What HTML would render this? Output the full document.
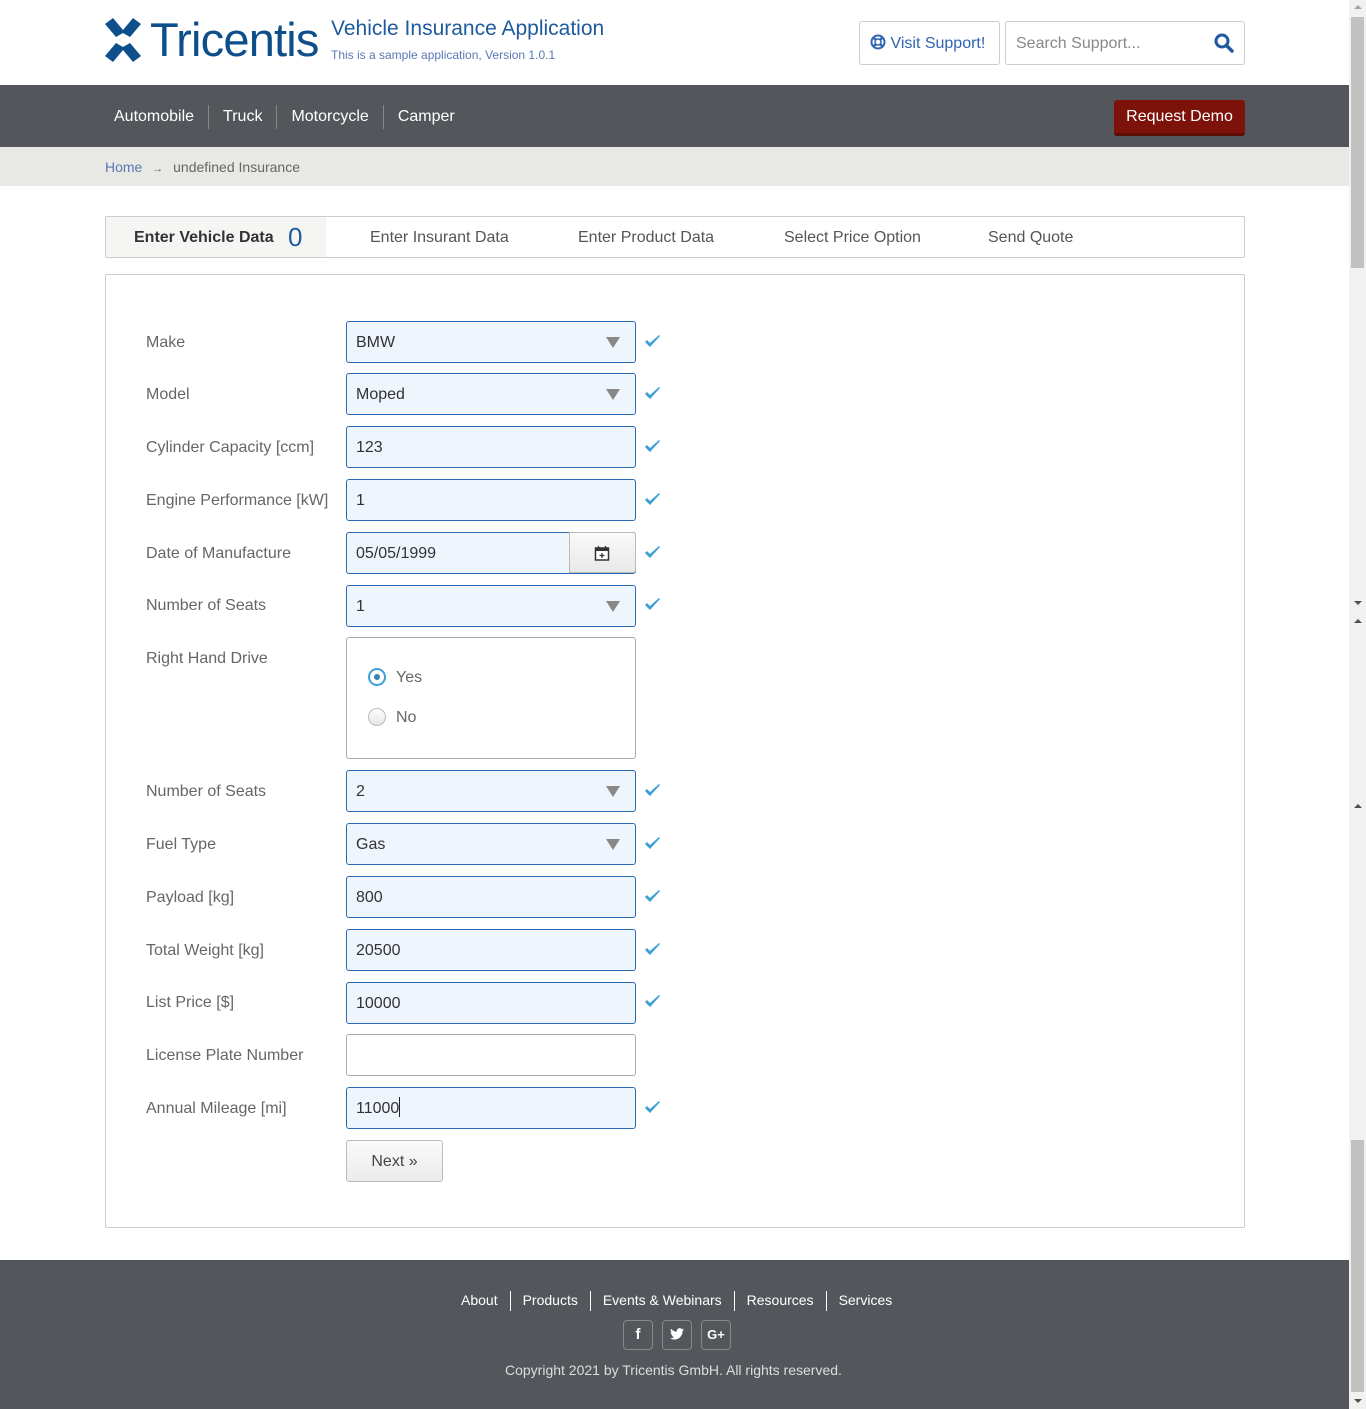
<!DOCTYPE html>
<html><head><meta charset="utf-8"><style>
*{box-sizing:border-box;margin:0;padding:0}
body{width:1366px;height:1409px;position:relative;font-family:"Liberation Sans",sans-serif;background:#fff;overflow:hidden;color:#555}
.a{position:absolute}
.lbl{position:absolute;left:146px;font-size:16px;color:#666;line-height:42px;margin-top:1px}
.in{position:absolute;left:346px;width:290px;height:42px;border:1px solid #2a6ab5;border-radius:3px;background:#eef5fd;font-size:16px;color:#333;line-height:42px;padding-left:9px}
.in.w{background:#fff;border-color:#aaa}
.arr{position:absolute;right:15px;top:15px;width:0;height:0;border-left:7px solid transparent;border-right:7px solid transparent;border-top:11px solid #888}
.chk{position:absolute;left:643px;width:18px;height:42px}
.nav span{color:#fff;font-size:16px}
.sep{display:inline-block;width:1px;height:24px;background:#888;vertical-align:middle;margin:0 14px}
.tab{position:absolute;top:229px;font-size:16px;color:#555}
.fl{color:#fff;font-size:14px}
.soc{position:absolute;top:1320px;width:30px;height:30px;border:1px solid #888;border-radius:4px;color:#fff;font-weight:bold;font-size:15px;text-align:center;line-height:28px}
</style></head><body>
<svg class="a" style="left:105px;top:18px" width="36" height="44" viewBox="0 0 36 44"><g fill="#0d4f8b"><path d="M0 6L8 0L18 12L28 0L36 6L25 19L18 15L11 19Z"/><path d="M0 38L8 44L18 32L28 44L36 38L25 25L18 29L11 25Z"/></g></svg>
<div class="a" style="left:150px;top:12px;font-size:47px;color:#0d4f8b;letter-spacing:-0.8px">Tricentis</div>
<div class="a" style="left:331px;top:17px;font-size:21px;color:#1f5a9e">Vehicle Insurance Application</div>
<div class="a" style="left:331px;top:48px;font-size:12px;color:#5a78b4">This is a sample application, Version 1.0.1</div>
<div class="a" style="left:859px;top:21px;width:141px;height:44px;border:1px solid #ccc;border-radius:3px;font-size:16px;color:#2e64b0;line-height:44px;padding-left:10px">
<svg width="16" height="16" viewBox="0 0 16 16" style="vertical-align:-2px"><circle cx="8" cy="8" r="6.5" fill="none" stroke="#2e64b0" stroke-width="2"/><circle cx="8" cy="8" r="3" fill="none" stroke="#2e64b0" stroke-width="1.5"/><path d="M3 3L6 6M13 3L10 6M3 13L6 10M13 13L10 10" stroke="#2e64b0" stroke-width="2.5"/></svg> Visit Support!</div>
<div class="a" style="left:1005px;top:21px;width:240px;height:44px;border:1px solid #ccc;border-radius:3px;font-size:16px;color:#888;line-height:44px;padding-left:10px">Search Support...
<svg class="a" style="right:10px;top:11px" width="20" height="20" viewBox="0 0 20 20"><circle cx="8" cy="8" r="6" fill="none" stroke="#1f5a9e" stroke-width="3"/><path d="M12.5 12.5L18 18" stroke="#1f5a9e" stroke-width="3.5" stroke-linecap="round"/></svg></div>
<div class="a nav" style="left:0;top:85px;width:1349px;height:62px;background:#53565b"></div>
<div class="a nav" style="left:114px;top:105px;line-height:24px"><span>Automobile</span><i class="sep"></i><span>Truck</span><i class="sep"></i><span>Motorcycle</span><i class="sep"></i><span>Camper</span></div>
<div class="a" style="left:1114px;top:100px;width:131px;height:36px;background:#7c1209;border-bottom:3px solid #5c0d06;border-radius:3px;color:#fff;font-size:16px;text-align:center;line-height:34px">Request Demo</div>
<div class="a" style="left:0;top:147px;width:1349px;height:39px;background:#e8e8e4"></div>
<div class="a" style="left:105px;top:159px;font-size:14px;color:#5a78b4">Home <span style="color:#666;font-size:11px;margin:0 6px">→</span> <span style="color:#666">undefined Insurance</span></div>
<div class="a" style="left:105px;top:216px;width:1140px;height:42px;border:1px solid #ccc;border-radius:2px"></div>
<div class="a" style="left:106px;top:217px;width:220px;height:40px;background:#f5f5f4"></div>
<div class="tab" style="left:134px;font-weight:bold;color:#333">Enter Vehicle Data</div>
<div class="a" style="left:288px;top:222px;font-size:26px;color:#1f5a9e">0</div>
<div class="tab" style="left:370px">Enter Insurant Data</div>
<div class="tab" style="left:578px">Enter Product Data</div>
<div class="tab" style="left:784px">Select Price Option</div>
<div class="tab" style="left:988px">Send Quote</div>
<div class="a" style="left:105px;top:274px;width:1140px;height:954px;border:1px solid #ccc;border-radius:2px"></div>

<svg width="0" height="0" style="position:absolute"><defs><path id="ck" d="M2 11L7 16L17 5L16 4L7 12L4 9Z" fill="#3d9fd6"/></defs></svg>

<div class="lbl" style="top:321px">Make</div><div class="in" style="top:321px">BMW<i class="arr"></i></div><svg class="chk" style="top:320px" viewBox="0 0 18 42"><use href="#ck" y="11"/></svg>
<div class="lbl" style="top:373px">Model</div><div class="in" style="top:373px">Moped<i class="arr"></i></div><svg class="chk" style="top:372px" viewBox="0 0 18 42"><use href="#ck" y="11"/></svg>
<div class="lbl" style="top:426px">Cylinder Capacity [ccm]</div><div class="in" style="top:426px">123</div><svg class="chk" style="top:425px" viewBox="0 0 18 42"><use href="#ck" y="11"/></svg>
<div class="lbl" style="top:479px">Engine Performance [kW]</div><div class="in" style="top:479px">1</div><svg class="chk" style="top:478px" viewBox="0 0 18 42"><use href="#ck" y="11"/></svg>
<div class="lbl" style="top:532px">Date of Manufacture</div><div class="in" style="top:532px">05/05/1999</div>
<div class="a" style="left:569px;top:532px;width:67px;height:41px;border:1px solid #bbb;border-radius:0 3px 3px 0;background:linear-gradient(#fafafa,#e8e8e8)">
<svg class="a" style="left:24px;top:12px" width="16" height="16" viewBox="0 0 16 16"><rect x="1.5" y="3" width="13" height="12" fill="#fff" stroke="#333" stroke-width="1.5"/><rect x="1.5" y="3" width="13" height="3" fill="#333"/><path d="M4.5 1V4M11.5 1V4M8 8V13M5.5 10.5H10.5" stroke="#333" stroke-width="1.3"/></svg></div>
<svg class="chk" style="top:531px" viewBox="0 0 18 42"><use href="#ck" y="11"/></svg>
<div class="lbl" style="top:584px">Number of Seats</div><div class="in" style="top:585px">1<i class="arr"></i></div><svg class="chk" style="top:583px" viewBox="0 0 18 42"><use href="#ck" y="11"/></svg>
<div class="lbl" style="top:637px">Right Hand Drive</div>
<div class="a" style="left:346px;top:637px;width:290px;height:122px;border:1px solid #aaa;border-radius:3px"></div>
<div class="a" style="left:368px;top:668px;width:18px;height:18px;border:2px solid #3d9fd6;border-radius:50%;background:#fff"><i class="a" style="left:4px;top:4px;width:6px;height:6px;border-radius:50%;background:#3d7fb8"></i></div>
<div class="a" style="left:396px;top:669px;font-size:16px;color:#666">Yes</div>
<div class="a" style="left:368px;top:708px;width:18px;height:18px;border:1px solid #bbb;border-radius:50%;background:linear-gradient(#fff,#e4e4e4)"></div>
<div class="a" style="left:396px;top:709px;font-size:16px;color:#666">No</div>
<div class="lbl" style="top:770px">Number of Seats</div><div class="in" style="top:770px">2<i class="arr"></i></div><svg class="chk" style="top:769px" viewBox="0 0 18 42"><use href="#ck" y="11"/></svg>
<div class="lbl" style="top:823px">Fuel Type</div><div class="in" style="top:823px">Gas<i class="arr"></i></div><svg class="chk" style="top:822px" viewBox="0 0 18 42"><use href="#ck" y="11"/></svg>
<div class="lbl" style="top:876px">Payload [kg]</div><div class="in" style="top:876px">800</div><svg class="chk" style="top:875px" viewBox="0 0 18 42"><use href="#ck" y="11"/></svg>
<div class="lbl" style="top:929px">Total Weight [kg]</div><div class="in" style="top:929px">20500</div><svg class="chk" style="top:928px" viewBox="0 0 18 42"><use href="#ck" y="11"/></svg>
<div class="lbl" style="top:981px">List Price [$]</div><div class="in" style="top:982px">10000</div><svg class="chk" style="top:980px" viewBox="0 0 18 42"><use href="#ck" y="11"/></svg>
<div class="lbl" style="top:1034px">License Plate Number</div><div class="in w" style="top:1034px"></div>
<div class="lbl" style="top:1087px">Annual Mileage [mi]</div><div class="in" style="top:1087px">11000<span style="display:inline-block;width:1px;height:20px;background:#222;vertical-align:-4px"></span></div><svg class="chk" style="top:1086px" viewBox="0 0 18 42"><use href="#ck" y="11"/></svg>
<div class="a" style="left:346px;top:1140px;width:97px;height:42px;border:1px solid #bbb;border-radius:3px;background:linear-gradient(#fafafa,#ebebeb);font-size:16px;color:#444;text-align:center;line-height:42px">Next »</div>
<div class="a" style="left:0;top:1260px;width:1349px;height:149px;background:#53565b"></div>
<div class="a" style="left:461px;top:1290px;line-height:20px"><span class="fl">About</span><i class="sep" style="height:20px;background:#fff;margin:0 12px"></i><span class="fl">Products</span><i class="sep" style="height:20px;background:#fff;margin:0 12px"></i><span class="fl">Events &amp; Webinars</span><i class="sep" style="height:20px;background:#fff;margin:0 12px"></i><span class="fl">Resources</span><i class="sep" style="height:20px;background:#fff;margin:0 12px"></i><span class="fl">Services</span></div>
<div class="soc" style="left:623px">f</div>
<div class="soc" style="left:662px"><svg width="14" height="12" viewBox="0 0 24 20" style="vertical-align:-1px"><path fill="#fff" d="M24 2.4a10 10 0 0 1-2.8.8A5 5 0 0 0 23.3.4a10 10 0 0 1-3.1 1.2A4.9 4.9 0 0 0 11.8 6 14 14 0 0 1 1.7.9a4.9 4.9 0 0 0 1.5 6.6A4.900 4.900 0 0 1 1 6.9a4.900 4.900 0 0 0 3.9 4.8 5 5 0 0 1-2.2.1 4.9 4.9 0 0 0 4.6 3.4A9.900 9.900 0 0 1 0 17.300 14 14 0 0 0 7.5 19.500c9 0 14-7.500 14-14v-.6A10 10 0 0 0 24 2.4z"/></svg></div>
<div class="soc" style="left:701px;font-size:13px">G+</div>
<div class="a" style="left:505px;top:1362px;font-size:14px;color:#ddd">Copyright 2021 by Tricentis GmbH. All rights reserved.</div>
<div class="a" style="left:1349px;top:0;width:17px;height:1409px;background:#f1f1f1"></div>
<div class="a" style="left:1351px;top:17px;width:13px;height:251px;background:#c1c1c1"></div>
<div class="a" style="left:1351px;top:1140px;width:13px;height:252px;background:#c1c1c1"></div>
<div class="a" style="left:1354px;top:5px;border-left:4px solid transparent;border-right:4px solid transparent;border-bottom:4px solid #a3a3a3"></div>
<div class="a" style="left:1354px;top:1399px;border-left:4px solid transparent;border-right:4px solid transparent;border-top:4px solid #505050"></div>
<div class="a" style="left:1354px;top:601px;border-left:4px solid transparent;border-right:4px solid transparent;border-top:4px solid #505050"></div>
<div class="a" style="left:1354px;top:619px;border-left:4px solid transparent;border-right:4px solid transparent;border-bottom:4px solid #505050"></div>
<div class="a" style="left:1354px;top:804px;border-left:4px solid transparent;border-right:4px solid transparent;border-bottom:4px solid #505050"></div>
</body></html>
